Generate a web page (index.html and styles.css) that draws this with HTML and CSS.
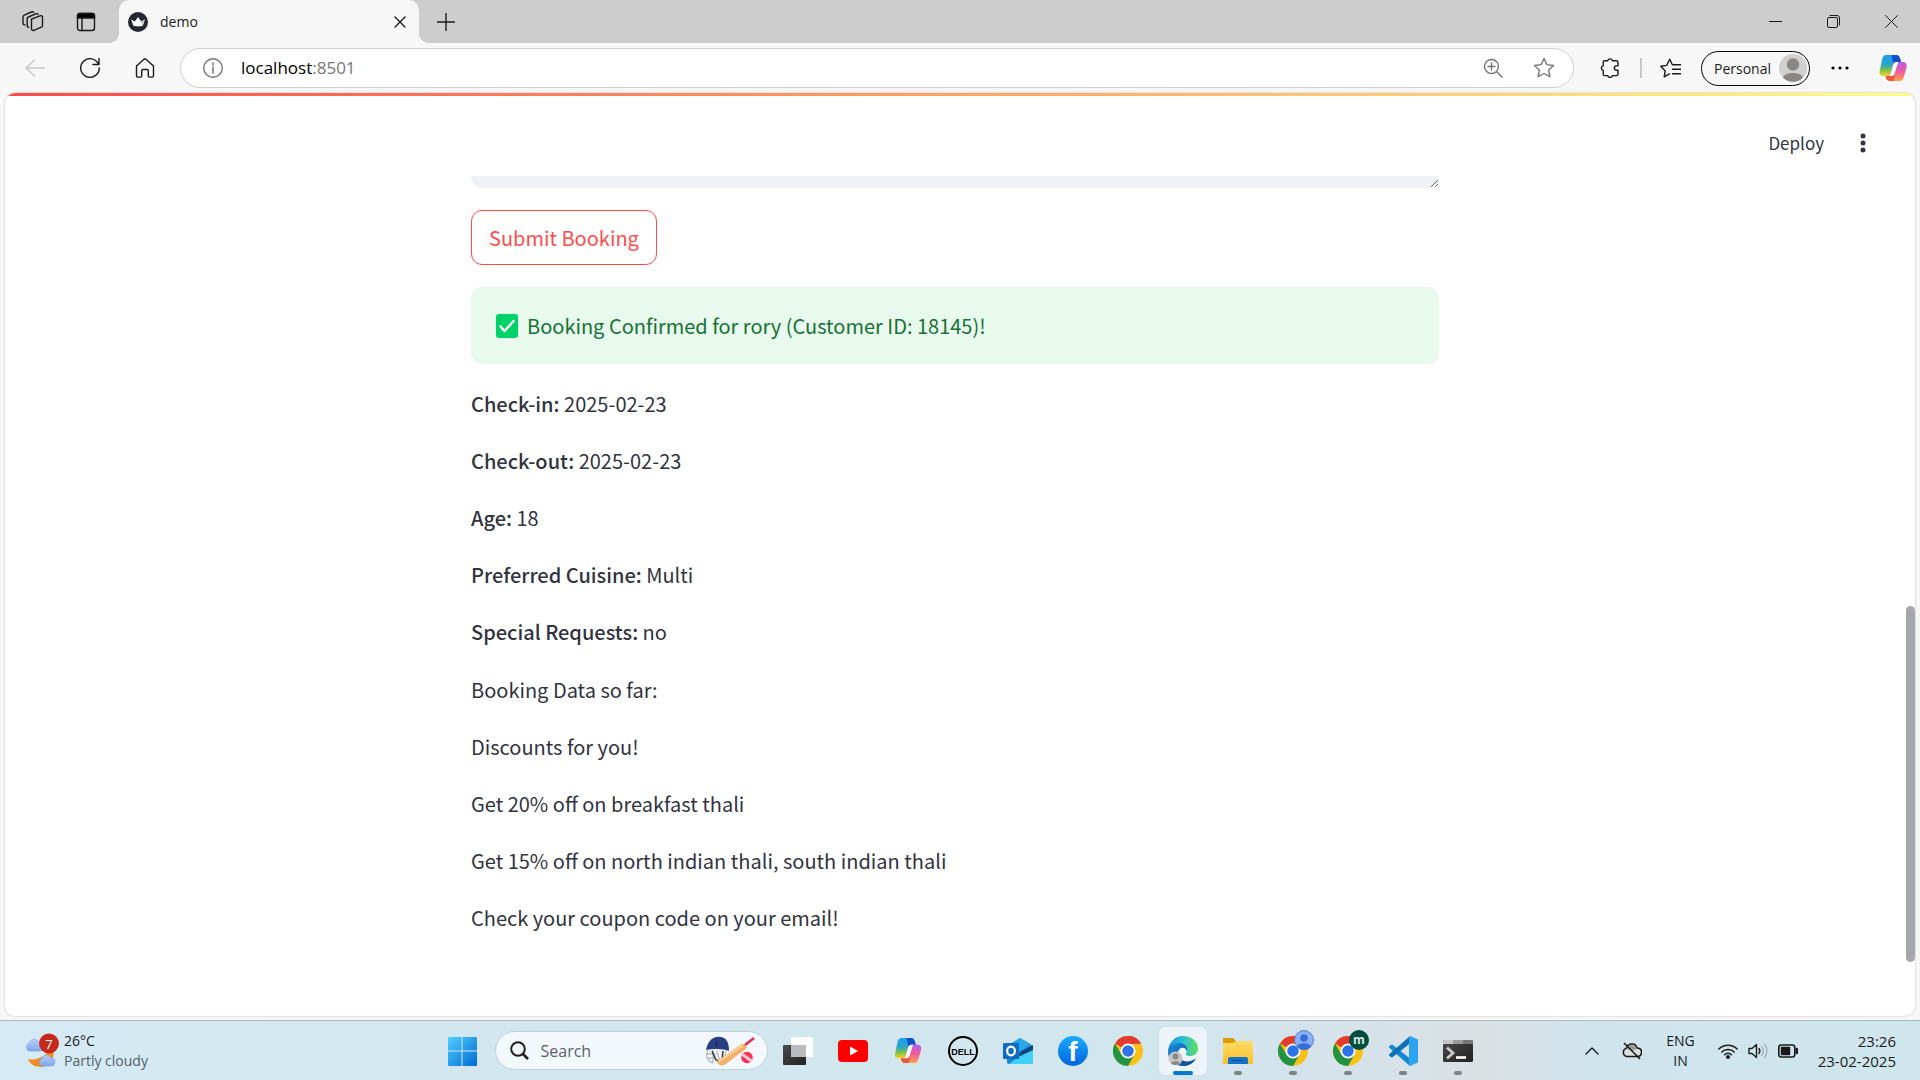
FILE: index.html
```html
<!DOCTYPE html>
<html lang="en">
<head>
<meta charset="utf-8">
<meta name="viewport" content="width=device-width, initial-scale=1">
<title>demo</title>
<link rel="stylesheet" href="styles.css">
</head>
<body>
<svg class="defs" aria-hidden="true">
  <defs>
    <linearGradient id="cpA" x1="0" y1="0" x2="0" y2="1"><stop offset="0" stop-color="#1f9cf0"/><stop offset=".45" stop-color="#2aa6c8"/><stop offset=".72" stop-color="#7cc243"/><stop offset="1" stop-color="#ffd02e"/></linearGradient>
    <linearGradient id="cpB" x1="0" y1="0" x2="0" y2="1"><stop offset="0" stop-color="#b45cf0"/><stop offset=".5" stop-color="#ef5a9b"/><stop offset="1" stop-color="#ffa24a"/></linearGradient>
    <linearGradient id="win" x1="0" y1="0" x2="1" y2="1"><stop offset="0" stop-color="#4fd0ff"/><stop offset="1" stop-color="#0069d1"/></linearGradient>
    <linearGradient id="edgeA" x1="0" y1="0" x2="1" y2="0"><stop offset="0" stop-color="#1b8fe0"/><stop offset=".5" stop-color="#2dc0d8"/><stop offset="1" stop-color="#5de05a"/></linearGradient>
    <linearGradient id="edgeB" x1="0" y1="0" x2="1" y2="1"><stop offset="0" stop-color="#1d8ee0"/><stop offset="1" stop-color="#0b4a94"/></linearGradient>
    <linearGradient id="fold" x1="0" y1="0" x2="0" y2="1"><stop offset="0" stop-color="#ffdc66"/><stop offset="1" stop-color="#fdbf2d"/></linearGradient>
    <linearGradient id="dark" x1="0" y1="0" x2="1" y2="1"><stop offset="0" stop-color="#4a4a4a"/><stop offset="1" stop-color="#222"/></linearGradient>
    <linearGradient id="fb" x1="0" y1="0" x2="0" y2="1"><stop offset="0" stop-color="#18acfe"/><stop offset="1" stop-color="#0163e0"/></linearGradient>
    <linearGradient id="cloud" x1="0" y1="0" x2="0" y2="1"><stop offset="0" stop-color="#b9cffa"/><stop offset="1" stop-color="#7fa5ea"/></linearGradient>
    <symbol id="copilot" viewBox="0 0 28 26">
      <path d="M7 0h10c2.500 0 3.500 1.500 4.200 4l.9 3h-4.600c-2 0-3 1-3.600 3l-2.400 8c-.6 2-1.700 3-3.700 3H4C1 21 0 18.500.7 15.500L3.200 4C3.900 1.500 5 0 7 0z" fill="url(#cpA)"/>
      <path d="M12.500 0H17c2.500 0 3.500 1.500 4.200 4l.9 3h-4.600c-1.500 0-2.500.5-3.200 1.700z" fill="#1250c8"/>
      <path d="M21 26H11c-2.500 0-3.500-1.500-4.200-4L6.500 21h1.600c2 0 3-1 3.600-3l2.400-8c.6-2 1.600-3 3.600-3H24c3 0 4.200 2.500 3.500 5.500L24.800 22c-.7 2.500-1.800 4-3.800 4z" fill="url(#cpB)"/>
      <path d="M14.700 26H11c-2.500 0-3.500-1.500-4.200-4L6.500 21h1.600c2 0 3-1 3.600-3l.6-2 4 1z" fill="#ee5836"/>
      <path d="M14.500 9.500c.6-1.700 1.500-2.500 3.200-2.500h1.600l-3.700 11.500c-.6 1.700-1.400 2.500-3 2.500H9c1.500-.3 2.300-1.300 2.800-3z" fill="#fff"/>
    </symbol>
    <symbol id="chrome" viewBox="0 0 30 30">
      <circle cx="15" cy="15" r="15" fill="#fbc116"/>
      <path d="M15 15L2 7.500A15 15 0 0 1 28 7.500H15z" fill="#e33b2e"/>
      <path d="M15 0A15 15 0 0 1 28 7.500L15 8.200z" fill="#e33b2e"/>
      <path d="M2 7.500A15 15 0 0 0 15 30l6.500-11.300L15 20 8.500 18.800z" fill="#229342"/>
      <circle cx="15" cy="15" r="7.500" fill="#fff"/><circle cx="15" cy="15" r="5.800" fill="#2f73e8"/>
    </symbol>
  </defs>
</svg>

<header class="browser">
  <div class="tabstrip">
    <button class="slot slot-tab" aria-label="Workspaces"><svg width="22" height="22" viewBox="0 0 22 22" class="line"><path d="M9.500 8.200L18 4.800c1.300-.5 2.500.2 2.500 1.500v8.200c0 .8-.4 1.400-1.200 1.700L12 19.300c-1.500.6-2.500-.2-2.500-1.500z"/><path d="M6.700 16.200c-1 .1-1.500-.6-1.500-1.600V7.800c0-.9.400-1.500 1.200-1.800l7.400-3.200c1-.4 2-.1 2.300.7M2.900 13.800c-1.100.2-1.900-.5-1.900-1.600V5.900c0-.9.400-1.500 1.200-1.800l7.200-3.100c.9-.4 1.900-.2 2.300.5"/></svg></button>
    <button class="slot slot-tab" aria-label="Tab actions"><svg width="20" height="20" viewBox="0 0 20 20" class="line"><rect x="1.500" y="1.500" width="17" height="17" rx="2.500"/><path d="M1.500 3.500a2 2 0 0 1 2-2h13a2 2 0 0 1 2 2V6h-17z" fill="#000"/><path d="M6 6v12.500"/></svg></button>
    <div class="tab">
      <svg width="20" height="20" viewBox="0 0 20 20"><circle cx="10" cy="10" r="10" fill="#262730"/><path d="M3.200 7.400l3.600 2.200L10 5l3.200 4.600 3.600-2.200-2 6.100c-2.500 1.200-7.100 1.200-9.600 0z" fill="#fff"/><path d="M10 5l3.200 4.600 3.600-2.200-2 6.100z" fill="#ccc"/></svg>
      <span class="tab-title">demo</span>
      <button class="tab-close" aria-label="Close tab"><svg width="12" height="12" viewBox="0 0 12 12" class="line"><path d="M1 1l10 10M11 1L1 11"/></svg></button>
    </div>
    <button class="slot slot-tab" aria-label="New tab"><svg width="18" height="18" viewBox="0 0 18 18" class="line"><path d="M9 .5v17M.5 9h17"/></svg></button>
    <div class="window-buttons">
      <button class="slot slot-win" aria-label="Minimize"><svg width="13" height="13" viewBox="0 0 13 13" class="line thin"><path d="M0 6.500h13"/></svg></button>
      <button class="slot slot-win" aria-label="Restore"><svg width="13" height="13" viewBox="0 0 13 13" class="line thin"><rect x=".5" y="2.500" width="10" height="10" rx="1.500"/><path d="M3 .5h7a2.500 2.500 0 0 1 2.500 2.500v7"/></svg></button>
      <button class="slot slot-win" aria-label="Close"><svg width="13" height="13" viewBox="0 0 13 13" class="line thin"><path d="M.5 .5l12 12M12.500.5l-12 12"/></svg></button>
    </div>
  </div>
  <div class="toolbar">
    <button class="slot slot-nav" aria-label="Back" disabled><svg width="20" height="18" viewBox="0 0 20 18" class="line pale"><path d="M9.500 1L1 9l8.500 8M1 9h19"/></svg></button>
    <button class="slot slot-nav" aria-label="Refresh"><svg width="20" height="20" viewBox="0 0 20 20" class="line"><path d="M18.500 6.200A9.300 9.300 0 1 0 19.300 10M19 .5v6h-6"/></svg></button>
    <button class="slot slot-nav" aria-label="Home"><svg width="20" height="20" viewBox="0 0 20 20" class="line"><path d="M1.500 8.600c0-.5.200-.9.600-1.200l6.900-6.200c.6-.5 1.400-.5 2 0l6.900 6.200c.4.300.6.700.6 1.200v9.200c0 .8-.5 1.300-1.300 1.300h-2.900c-.6 0-1-.4-1-1v-5.500c0-.7-.4-1.100-1.100-1.100H7.800c-.7 0-1.100.4-1.100 1.100v5.500c0 .6-.4 1-1 1H2.800c-.8 0-1.300-.5-1.300-1.300z"/></svg></button>
    <form class="omnibox">
      <svg width="20" height="20" viewBox="0 0 20 20" class="line gray"><circle cx="10" cy="10" r="9.300"/><path d="M10 9v6M10 5v2" stroke-width="1.600"/></svg>
      <span class="url" role="textbox" tabindex="0" aria-label="Address">localhost<span class="port">:8501</span></span>
      <button type="button" class="slot slot-omni" aria-label="Zoom"><svg width="20" height="20" viewBox="0 0 20 20" class="line gray"><circle cx="8.500" cy="8.500" r="7"/><path d="M13.700 13.700L19 19M8.500 5v7M5 8.500h7"/></svg></button>
      <button type="button" class="slot slot-omni" aria-label="Add to favorites"><svg width="22" height="22" viewBox="0 0 22 22" class="line gray"><path d="M11 1.500l2.900 6.100 6.600.9-4.800 4.600 1.200 6.600L11 16.500l-5.900 3.200 1.200-6.600L1.500 8.500l6.600-.9z"/></svg></button>
    </form>
    <button class="slot slot-act" aria-label="Extensions"><svg width="20" height="20" viewBox="0 0 20 20" class="line"><path d="M4.500 2.700h3.300a2.300 2.300 0 0 1 4.500 0h3.900c1 0 1.800.7 1.800 1.700v3.500h-1.500a2.200 2.200 0 0 0 0 4.400H18v3.600c0 1-.8 1.700-1.800 1.700h-3.900a2.300 2.300 0 0 1-4.500 0H4.900c-1 0-1.700-.7-1.700-1.700v-3.500a2.300 2.300 0 0 1 0-4.500V4.400c0-1 .3-1.700 1.300-1.700z"/></svg></button>
    <span class="divider"></span>
    <button class="slot slot-act" aria-label="Favorites"><svg width="21" height="20" viewBox="0 0 21 20" class="line"><path d="M9.500 15.800l-5.300 3 1-5.900-4.400-4.600 5.900-.9L9.700 1.300l2.700 5.500M12.500 6.800H21M12.500 11.300H21M12.500 15.800H21"/></svg></button>
    <button class="profile">Personal<svg width="28" height="28" viewBox="0 0 28 28"><circle cx="14" cy="14" r="14" fill="#d2d0ce"/><circle cx="14" cy="10.500" r="6.200" fill="#8a8684"/><path d="M4 23.500C6 20 9.500 19 14 19s8 1 10 4.500A14 14 0 0 1 4 23.500z" fill="#8a8684"/></svg></button>
    <button class="slot slot-more" aria-label="Settings and more"><svg width="18" height="4" viewBox="0 0 18 4"><circle cx="2" cy="2" r="1.600"/><circle cx="9" cy="2" r="1.600"/><circle cx="16" cy="2" r="1.600"/></svg></button>
    <button class="slot slot-copilot" aria-label="Copilot"><svg width="28" height="26"><use href="#copilot"/></svg></button>
  </div>
</header>

<div class="viewport">
  <main class="app">
    <div class="decoration"></div>
    <div class="app-header">
      <button class="deploy">Deploy</button>
      <button class="menu" aria-label="Main menu"><svg width="6" height="20" viewBox="0 0 6 20" fill="#31333f"><circle cx="3" cy="3" r="2.500"/><circle cx="3" cy="10" r="2.500"/><circle cx="3" cy="17" r="2.500"/></svg></button>
    </div>
    <div class="scroller">
      <div class="block">
        <div class="clip"><textarea class="requests" aria-label="Special requests"></textarea></div>
        <button class="submit">Submit Booking</button>
        <div class="success" role="alert">
          <svg width="22" height="24" viewBox="0 0 22 24"><rect width="22" height="24" rx="3" fill="#00d26a"/><path d="M4.500 12.500l4 4.500 9-10" fill="none" stroke="#fff" stroke-width="2.400" stroke-linecap="round" stroke-linejoin="round"/></svg>
          <span>Booking Confirmed for rory (Customer ID: 18145)!</span>
        </div>
        <div class="copy">
          <p><strong>Check-in:</strong> 2025-02-23</p>
          <p><strong>Check-out:</strong> 2025-02-23</p>
          <p><strong>Age:</strong> 18</p>
          <p><strong>Preferred Cuisine:</strong> Multi</p>
          <p><strong>Special Requests:</strong> no</p>
        </div>
        <div class="copy">
          <p>Booking Data so far:</p>
          <p>Discounts for you!</p>
          <p>Get 20% off on breakfast thali</p>
          <p>Get 15% off on north indian thali, south indian thali</p>
          <p>Check your coupon code on your email!</p>
        </div>
      </div>
    </div>
    <div class="scroll-thumb"></div>
  </main>
</div>

<footer class="taskbar">
  <div class="weather">
    <svg width="35" height="36" viewBox="0 0 35 36"><path d="M3 26c5 1.500 14 0 20-7 3 0 5-.5 5.500 0 .5 9-5 15-12.500 15C9.500 34 4.500 30.500 3 26z" fill="#f28c1c"/><path d="M4 18a4 4 0 0 1 0-7.500C5 5.500 12 5 14 9.500c3-.5 4.500 2 4.500 4.200 0 2.500-1.500 4.300-4 4.300z" fill="url(#cloud)" stroke="#7d9fe0" stroke-width=".6"/><path d="M16.500 33a4 4 0 0 1 .5-7.500c1.500-4.500 7-4.500 8.500-.7 3-.3 4.500 1.700 4.500 3.900 0 2.500-1.500 4.300-4 4.300z" fill="url(#cloud)" stroke="#7d9fe0" stroke-width=".6"/><circle cx="24" cy="10.500" r="10" fill="#c42b1c"/><text x="24" y="15.500" text-anchor="middle" class="badge-text">7</text></svg>
    <div class="weather-text"><span>26°C</span><span class="muted">Partly cloudy</span></div>
  </div>
  <nav class="apps" aria-label="Taskbar">
    <button class="app-slot" aria-label="Start"><svg width="30" height="30" viewBox="0 0 30 30" fill="url(#win)"><path d="M1 2a1 1 0 0 1 1-1h12.500v13.500H1zM15.500 1H29a1 1 0 0 1 1 1v12.500H15.500zM1 15.500h13.500V30H2a1 1 0 0 1-1-1zM15.500 15.500H30V29a1 1 0 0 1-1 1H15.500z"/></svg></button>
    <label class="search">
      <svg width="19" height="19" viewBox="0 0 19 19" fill="none" stroke="#1f1f1f" stroke-width="2"><circle cx="8" cy="8" r="6.800"/><path d="M13 13l5 5" stroke-width="2.600"/></svg>
      <input type="search" placeholder="Search" aria-label="Search">
      <svg width="50" height="30" viewBox="0 0 50 30"><path d="M3 14c-3 6-1 11 5 13M2 18h9M3 22h8M8 14v13M12 15l2 8c3 1 6-1 7-8" fill="none" stroke="#b4b9be" stroke-width="1.300"/><path d="M7 15l4 9 6 2M18 15l-1 9" fill="none" stroke="#333" stroke-width="1.500"/><path d="M1 14C3 5 8 0 15 1c6 0 9 5 9 14-5-2-13-3-23-1z" fill="#2a3f82"/><path d="M13 5c-2 1-2 4-1 6" fill="none" stroke="#131f4d"/><path d="M12 25L36 8.500c2-1.500 5.500.5 6 3.500L20 28.500c-3 2.500-8 0-8-3.500z" fill="#f4b06a"/><path d="M14 25L38 9.500" stroke="#fbd3a0" stroke-width="2"/><path d="M40 9L49 2" stroke="#e0304f" stroke-width="2.600"/><circle cx="42" cy="21.500" r="5.800" fill="#ff2f55"/><path d="M37.500 18.500l9 6.500" stroke="#ffd2da" stroke-width="3"/></svg>
    </label>
    <button class="app-slot" aria-label="Task view"><svg width="30" height="30" viewBox="0 0 30 30"><rect y="9" width="23" height="20" rx="1" fill="url(#dark)"/><rect x="8" y="1" width="22" height="20" rx="1" fill="#fff" opacity=".9"/><path d="M8 9h15v12H8z" fill="#b9bbbc"/></svg></button>
    <button class="app-slot" aria-label="YouTube"><svg width="30" height="30" viewBox="0 0 30 30"><rect y="4" width="30" height="22" rx="4" fill="#f00"/><path d="M12 10.500v9l8-4.500z" fill="#fff"/></svg></button>
    <button class="app-slot" aria-label="Copilot"><svg width="28" height="25"><use href="#copilot"/></svg></button>
    <button class="app-slot" aria-label="Dell"><svg width="30" height="30" viewBox="0 0 30 30"><circle cx="15" cy="15" r="14" fill="none" stroke="#000" stroke-width="2"/><text x="15" y="18.500" text-anchor="middle" class="dell-text">DELL</text></svg></button>
    <button class="app-slot" aria-label="Outlook"><svg width="30" height="30" viewBox="0 0 30 30"><path d="M4 10L17 2l13 8v16a2 2 0 0 1-2 2H6a2 2 0 0 1-2-2z" fill="#1a86d8"/><path d="M4 10L17 2l11 6-12 8z" fill="#28a8ea"/><path d="M17 16L30 9v8L15 28z" fill="#14447d"/><path d="M15 21l15-7v12a2 2 0 0 1-2 2H6z" fill="#3fd2f6"/><rect y="7" width="16" height="16" rx="1" fill="#0f6cbd"/><ellipse cx="8" cy="15" rx="3.900" ry="4.300" fill="none" stroke="#fff" stroke-width="2.300"/></svg></button>
    <button class="app-slot" aria-label="Facebook"><svg width="30" height="30" viewBox="0 0 30 30"><circle cx="15" cy="15" r="15" fill="url(#fb)"/><text x="15" y="25" text-anchor="middle" class="fb-text">f</text></svg></button>
    <button class="app-slot" aria-label="Chrome"><svg width="30" height="30"><use href="#chrome"/></svg></button>
    <button class="app-slot current" aria-label="Edge"><svg width="30" height="30" viewBox="0 0 30 30"><path d="M0 15C1 6 7 0 15 0c9 0 15 6 15 12.500 0 5-4 7.500-8 7.500-3 0-5-1-4-2.500 2-3.500-1-7.500-6-7.500C6 10 1 12 0 15z" fill="url(#edgeA)"/><path d="M0 15c1-5 6-8 11-8 6 0 9 4 8 8-1-3-4-4-6-3-3 1.500-4 5-2.500 9 2 5 8 8 13 5.500C20 29.500 17 30 15 30 6 30-.5 23 0 15z" fill="url(#edgeB)"/><path d="M11 17c-1 7 7 12 17 5.500C26 27 21 30 15 30c-3-2-5-8-4-13z" fill="#0f559f"/><circle cx="7.500" cy="22.500" r="7" fill="#c9c7c5"/><circle cx="7.500" cy="20.500" r="3" fill="#8a8684"/><path d="M3 27c1-2.500 8-2.500 9 0-2 2.500-7 2.500-9 0z" fill="#8a8684"/></svg></button>
    <button class="app-slot running" aria-label="File Explorer"><svg width="30" height="30" viewBox="0 0 30 30"><path d="M0 3a1 1 0 0 1 1-1h9l3 3h16v8H0z" fill="#dc9a08"/><path d="M0 7h10l3-2h16a1 1 0 0 1 1 1v22H0z" fill="url(#fold)"/><path d="M5 28v-5a2 2 0 0 1 2-2h16a2 2 0 0 1 2 2v5z" fill="#1174c9"/><path d="M9 24.500h12" stroke="#0b4f91" stroke-width="1.200"/></svg></button>
    <button class="app-slot running" aria-label="Chrome, first profile"><svg width="30" height="30"><use href="#chrome"/></svg><svg class="overlay" width="20" height="20" viewBox="0 0 20 20"><circle cx="10" cy="10" r="9.500" fill="#8ab0f8" stroke="#667fae"/><circle cx="10" cy="8" r="3.800" fill="#376ed6"/><path d="M3 17c0-5 14-5 14 0a9.500 9.500 0 0 1-14 0z" fill="#376ed6"/></svg></button>
    <button class="app-slot running" aria-label="Chrome, second profile"><svg width="30" height="30"><use href="#chrome"/></svg><svg class="overlay" width="20" height="20" viewBox="0 0 20 20"><circle cx="10" cy="10" r="10" fill="#004d40"/><text x="10" y="14" text-anchor="middle" class="m-text">m</text></svg></button>
    <button class="app-slot running" aria-label="Visual Studio Code"><svg width="30" height="30" viewBox="0 0 30 30"><path d="M1 10.500l2-1.800 1.500.1L22 22.500V30L1.200 11.700z" fill="#1389d4"/><path d="M1 19.500l2 1.800 1.500-.1L22 7.500V0L1.200 18.300z" fill="#0d71b8"/><path d="M22 0l8 3.500v23L22 30l-1-1V1z" fill="#2ba3ef"/></svg></button>
    <button class="app-slot running" aria-label="Terminal"><svg width="30" height="30" viewBox="0 0 30 30"><rect y="4" width="30" height="22" rx="1.500" fill="url(#dark)"/><path d="M0 8V5.500A1.500 1.500 0 0 1 1.500 4H10v4z" fill="#c6c6c6"/><path d="M10 4h10v4H10z" fill="#999"/><path d="M20 4h8.500A1.500 1.500 0 0 1 30 5.500V8H20z" fill="#777"/><path d="M4 11.500l6 5.500-6 5.500" fill="none" stroke="#ccc" stroke-width="2.800"/><path d="M13 21.500h10" stroke="#fff" stroke-width="2.600"/></svg></button>
  </nav>
  <div class="tray">
    <button class="tray-icon" aria-label="Show hidden icons"><svg width="14" height="8" viewBox="0 0 14 8" class="line"><path d="M1 7l6-6 6 6"/></svg></button>
    <svg width="20" height="18" viewBox="0 0 20 18"><path d="M5 14.500a4.300 4.300 0 0 1-.5-8.400C6 1 13.500.5 15 6c3 0 4.500 2 4.500 4.300 0 2.500-1.800 4.200-4.200 4.200z" fill="#ddd" stroke="#1a1a1a" stroke-width="1.500"/><path d="M5 6.500C7 2 13 2 14.500 7L10 9z" fill="#999"/><path d="M2 1l16 16" stroke="#1a1a1a" stroke-width="1.600"/></svg>
    <div class="lang"><span>ENG</span><span>IN</span></div>
    <div class="status">
      <svg width="20" height="16" viewBox="0 0 20 16" class="line"><path d="M.8 6a13 13 0 0 1 18.400 0M3.800 9a8.800 8.800 0 0 1 12.400 0M6.600 11.700a4.800 4.800 0 0 1 6.800 0"/><circle cx="10" cy="14" r="1.300" fill="#1a1a1a"/></svg>
      <svg width="20" height="16" viewBox="0 0 20 16" class="line"><path d="M1 5.500h3L8.500 1.500v13L4 10.500H1zM11 5.500c1 1.500 1 3.500 0 5"/><path d="M13.500 3.500c2.500 2.500 2.500 6.500 0 9M16.500 1.500c3.300 3.500 3.300 9.500 0 13" stroke="#a5b4bb"/></svg>
      <svg width="20" height="14" viewBox="0 0 20 14" class="line"><rect x=".8" y="1" width="16" height="12" rx="2.500" stroke-width="1.600"/><path d="M3.500 3.500h8v7h-8z" fill="#1a1a1a"/><path d="M18.800 5v4" stroke-width="2.400"/></svg>
    </div>
    <div class="clock"><span>23:26</span><span>23-02-2025</span></div>
  </div>
</footer>
</body>
</html>
```
FILE: styles.css
```css
* { box-sizing: border-box; }

body {
  margin: 0;
  min-height: 100vh;
  display: flex;
  flex-direction: column;
  background: #f7f7f7;
  color: #1a1a1a;
  font-family: "Segoe UI", "Open Sans", sans-serif;
  font-size: 14px;
}

button {
  font: inherit;
  color: inherit;
  background: none;
  border: 0;
  padding: 0;
}

svg { display: block; flex: none; }
.defs { position: absolute; width: 0; height: 0; }

.line { fill: none; stroke: #1a1a1a; stroke-width: 1.4; stroke-linecap: round; stroke-linejoin: round; }
.line.thin { stroke-width: 1; }
.line.gray { stroke: #767676; }
.line.pale { stroke: #c8c8c8; }

/* Browser frame */
.tabstrip { display: flex; height: 43px; padding-left: 6px; background: #cdcdcd; }
.slot { display: flex; align-items: center; justify-content: center; flex: none; }
.slot-tab { width: 53px; }
.slot-win { width: 58px; }
.slot-nav { width: 55px; }
.slot-omni { width: 51px; }
.slot-act { width: 56px; }
.slot-more { width: 60px; }
.slot-copilot { width: 46px; }

.tab {
  position: relative;
  display: flex;
  align-items: center;
  gap: 12px;
  width: 300px;
  margin-left: 7px;
  padding: 0 13px 0 9px;
  background: #f7f7f7;
  border-radius: 10px 10px 0 0;
}
.tab::before, .tab::after {
  content: "";
  position: absolute;
  bottom: 0;
  width: 10px;
  height: 10px;
}
.tab::before { right: 100%; background: radial-gradient(circle at 0 0, #cdcdcd 10px, #f7f7f7 10px); }
.tab::after { left: 100%; background: radial-gradient(circle at 100% 0, #cdcdcd 10px, #f7f7f7 10px); }
.tab-title { flex: 1; font-size: 14px; line-height: 20px; }
.window-buttons { display: flex; margin-left: auto; }

.toolbar { display: flex; align-items: center; height: 50px; padding: 0 4px 0 7px; }
.omnibox {
  flex: 1;
  display: flex;
  align-items: center;
  height: 40px;
  margin: 0 8px;
  padding: 0 4px 0 22px;
  border: 1px solid #cfcfcf;
  border-radius: 20px;
  background: #fff;
}
.url { flex: 1; padding-left: 18px; font-size: 17px; line-height: 24px; color: #000; }
.port { color: #767676; }
.divider { width: 2px; height: 20px; margin-left: 2px; background: #c8c8c8; }
.profile {
  display: flex;
  align-items: center;
  justify-content: space-between;
  width: 109px;
  height: 35px;
  margin-left: 3px;
  padding: 0 2px 0 12px;
  border: 1px solid #000;
  border-radius: 18px;
}

/* Streamlit page */
.viewport { flex: 1; display: flex; padding: 0 5px 4px; }
.app {
  position: relative;
  flex: 1;
  display: flex;
  flex-direction: column;
  overflow: hidden;
  border-radius: 10px;
  background: #fff;
  box-shadow: 0 0 2px #b4b4b4;
  color: #31333f;
  font-family: "Source Sans Pro", "Noto Sans CJK JP", sans-serif;
  font-size: 20px;
  line-height: 35px;
}
.decoration { height: 3px; background: linear-gradient(90deg, #ff4b4b, #fffd80); }
.app-header {
  display: flex;
  align-items: center;
  justify-content: flex-end;
  gap: 36px;
  height: 80px;
  padding: 14px 49px 0 0;
}
.deploy { font-size: 17px; line-height: 24px; }
.scroller { padding-right: 10px; }
.block { width: 100%; max-width: 968px; margin: 0 auto; padding-bottom: 56px; }
.clip { display: flex; align-items: flex-end; height: 12px; overflow: hidden; }
.requests {
  flex: none;
  width: 100%;
  height: 130px;
  border: 0;
  border-radius: 11px;
  background: #f0f2f6;
  font: inherit;
  color: inherit;
}
.submit {
  display: block;
  margin: 22px 0;
  padding: 9px 17px;
  border: 1px solid #ff4b4b;
  border-radius: 11px;
  color: #ff4b4b;
}
.success {
  display: flex;
  align-items: center;
  gap: 9px;
  margin-bottom: 22px;
  padding: 21px 25px;
  border-radius: 11px;
  background: #e8f9ee;
  color: #177233;
}
.copy { display: flex; flex-direction: column; gap: 22px; }
.copy + .copy { margin-top: 23px; }
.copy p { margin: 0; }
.copy strong { font-weight: 500; }
.scroll-thumb {
  position: absolute;
  right: 0;
  top: 513px;
  width: 9px;
  height: 356px;
  border-radius: 5px;
  background: #a6a7ac;
}

/* Taskbar */
.taskbar {
  display: grid;
  grid-template-columns: 1fr auto 1fr;
  align-items: center;
  height: 60px;
  border-top: 1px solid #a9b8bf;
  background: linear-gradient(90deg, #d6eaf5, #d2e7ef 25%, #d2e6ee 60%, #d6e2ea 72%, #dbe1e3 77%, #d0e4ee 83%, #cfe6ec);
}
.weather { display: flex; align-items: center; gap: 4px; padding-left: 25px; }
.weather-text, .lang, .clock { display: flex; flex-direction: column; font-size: 14px; line-height: 20px; }
.muted { color: #536068; }
.badge-text { font-size: 13px; fill: #fff; }
.dell-text { font: bold 9px "Liberation Sans", sans-serif; }
.fb-text { font: bold 28px "Liberation Sans", sans-serif; fill: #fff; }
.m-text { font: bold 12px "Open Sans", sans-serif; fill: #d9e8e5; }

.apps { display: flex; align-items: center; }
.app-slot {
  position: relative;
  display: flex;
  align-items: center;
  justify-content: center;
  width: 55px;
  height: 48px;
}
.search {
  display: flex;
  align-items: center;
  gap: 12px;
  width: 273px;
  height: 39px;
  margin: 0 3px 0 5px;
  padding: 0 12px 0 14px;
  border: 1px solid #bfd0d8;
  border-radius: 20px;
  background: #f2f8fc;
}
.search input {
  flex: 1;
  min-width: 0;
  padding: 0;
  border: 0;
  background: none;
  font: inherit;
  font-size: 16px;
}
.search input::placeholder { color: #5b6267; }
.current { width: 48px; margin: 0 4px 0 3px; border-radius: 5px; background: #edf4f9; box-shadow: 0 0 1px #9fb0b8; }
.current::after, .running::after {
  content: "";
  position: absolute;
  bottom: 0;
  width: 8px;
  height: 4px;
  border-radius: 2px;
  background: #7d8488;
}
.current::after { width: 20px; background: #0078d4; }
.overlay { position: absolute; top: 3px; right: 7px; }

.tray { display: flex; align-items: center; justify-content: flex-end; padding-right: 24px; }
.tray > svg { margin: 0 24px 0 23px; }
.lang { align-items: center; }
.status { display: flex; align-items: center; gap: 10px; margin: 0 20px 0 23px; }
.clock { align-items: flex-end; font-size: 15px; }
```
